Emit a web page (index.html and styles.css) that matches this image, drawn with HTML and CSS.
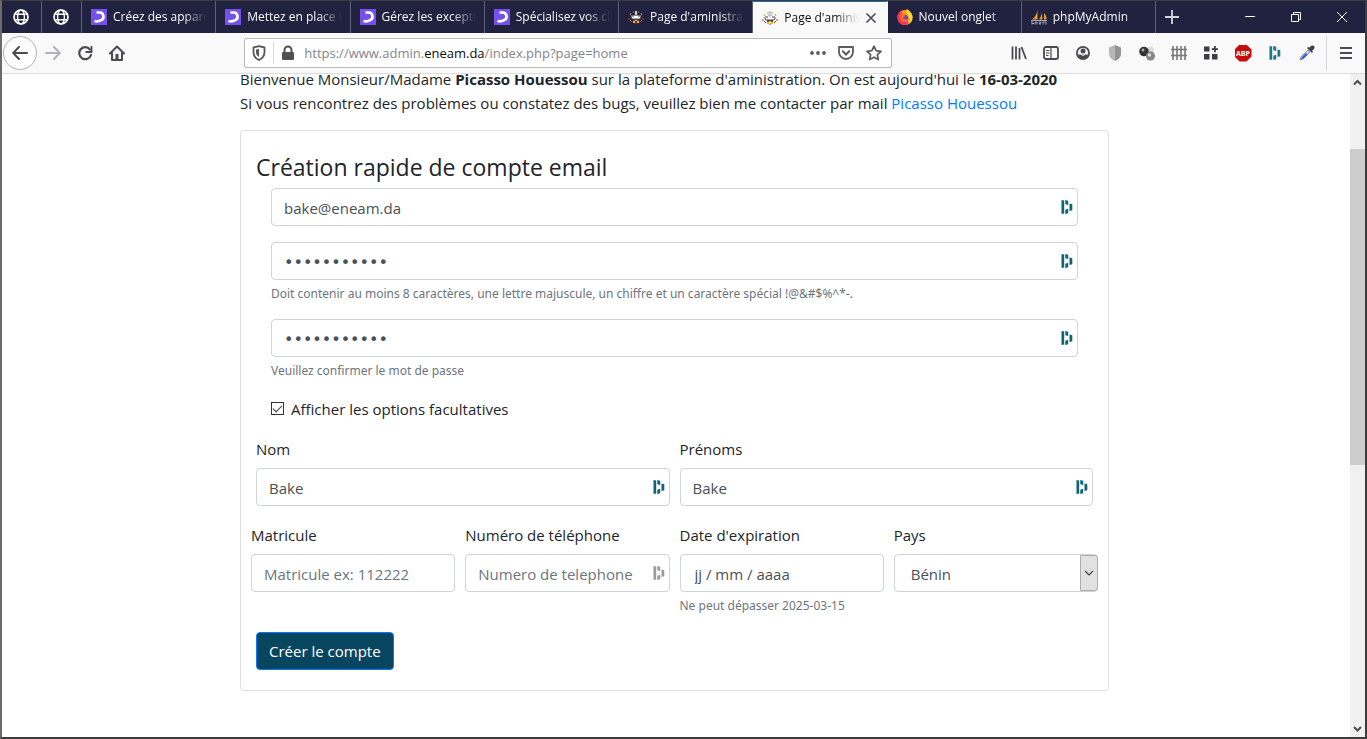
FILE: index.html
```html
<!DOCTYPE html>
<html lang="fr">
<head>
<meta charset="utf-8">
<title>Page d'aministration</title>
<link rel="stylesheet" href="styles.css">
</head>
<body>
<svg class="defs" aria-hidden="true">
  <symbol id="globe" viewBox="0 0 16 16"><circle cx="8" cy="8" r="7" fill="none" stroke="#fff" stroke-width="1.7"/><ellipse cx="8" cy="8" rx="3.4" ry="7" fill="none" stroke="#fff" stroke-width="1.4"/><path d="M1.5 5.3h13M1.5 10.7h13" stroke="#fff" stroke-width="1.4"/></symbol>
  <symbol id="oc" viewBox="0 0 16 16"><path fill="#7451eb" d="M0 0h16v16H0z"/><path d="M5.500 3.500h2.700a4 4 0 0 1 1.500 7.800Q7.500 13 3.500 12" fill="none" stroke="#fff" stroke-width="2.700"/></symbol>
  <symbol id="crest" viewBox="0 0 16 16"><path d="M3 6.500h10L12 10H4z" fill="#fff"/><path d="M7 2h2v4H7z" fill="#fff" stroke="#555" stroke-width=".5"/><path d="M5 10h6v2H5z" fill="#4a4a42"/><path d="M5 12h2v2H5zM9 12h2v2H9zM7 11h2v1H7z" fill="#f5c518"/><path d="M2 11l2 2M14 11l-2 2M7 14h2M1 9v2M15 9v2" stroke="#d8302f"/><path d="M2 6l1-2M14 6l-1-2M5 3h1M10 3h1" stroke="#c8a028"/><path d="M2.500 7.500L4 10h8l1.500-2.500M3 7h3M10 7h3" stroke="#444" fill="none"/></symbol>
  <symbol id="dash" viewBox="0 0 12 16"><path d="M.5 1l2.700.5v13L.5 15zM4.300 1l2.900.7v4.300l-2.900-.8zM4.300 10.800l2.900-1v4.400l-2.900.8zM8.500 4.500l2.800.8v6l-2.800.8z" fill="currentColor"/></symbol>
</svg>
<div class="window">
  <header class="tabstrip">
    <nav class="tabs" aria-label="Onglets">
      <button class="tab pinned" aria-label="Onglet épinglé 1"><svg class="i16"><use href="#globe"/></svg></button>
      <button class="tab pinned" aria-label="Onglet épinglé 2"><svg class="i16"><use href="#globe"/></svg></button>
      <button class="tab"><svg class="i16"><use href="#oc"/></svg><span class="title">Créez des apparences</span></button>
      <button class="tab"><svg class="i16"><use href="#oc"/></svg><span class="title">Mettez en place un</span></button>
      <button class="tab"><svg class="i16"><use href="#oc"/></svg><span class="title">Gérez les exceptions</span></button>
      <button class="tab"><svg class="i16"><use href="#oc"/></svg><span class="title">Spécialisez vos classes</span></button>
      <button class="tab"><svg class="i16"><use href="#crest"/></svg><span class="title">Page d'aministration</span></button>
      <button class="tab active"><svg class="i16"><use href="#crest"/></svg><span class="title">Page d'aministration</span><svg class="close" viewBox="0 0 12 12"><path d="M1.500 1.500l9 9M10.500 1.500l-9 9" stroke="#4a4a4f" stroke-width="1.600"/></svg></button>
      <button class="tab"><svg class="i16" viewBox="0 0 16 16"><circle cx="8" cy="8.500" r="7.500" fill="#ff9a20"/><path d="M.6 6C1.500 4 3 2 3.500 1.500L5 4l-1 8 9 1.500C10 17 5 16.500 2.500 14 .5 12 0 9 .6 6z" fill="#f5315c"/><path d="M9.500 0c3 1.500 6 4 6 8.500s-3 6.500-5.500 7c4-3 2-6 1-8S9 3 9.500 0z" fill="#ffd72b"/><circle cx="8" cy="9" r="3.300" fill="#7541c4"/><path d="M3.500 5.500c2-1 4 0 5 1.500L6 8.500c.5 2 3 2 5 1-1 3-5 4-7 1-1-2-1-4-.5-5z" fill="#ff6a26"/></svg><span class="title">Nouvel onglet</span></button>
      <button class="tab"><svg class="i16" viewBox="0 0 16 16"><path d="M6.500 0c0 4-2 8-5.500 10.500h5.500zM10.500 2c.5 3-.5 6-2.500 8.500h3.500zM13 4c2 2 2.500 4 2.500 6.500H13z" fill="#f39a2d"/><path d="M0 11.500h16M1 12v3.500M4 15.500V13h2v2.500M8 12.500l1 3 1-3M12 15.500V13h3v2.500M1 14.500h2" stroke="#a5a8b8" fill="none"/></svg><span class="title">phpMyAdmin</span></button>
    </nav>
    <div class="controls">
      <button class="newtab" aria-label="Nouvel onglet"><svg class="i16" viewBox="0 0 16 16"><path d="M8 1v14M1 8h14" stroke="#d5d5dc" stroke-width="1.800"/></svg></button>
      <button class="wbtn" aria-label="Réduire"><svg class="i12" viewBox="0 0 12 12"><path d="M1 5.500h10" stroke="#fff"/></svg></button>
      <button class="wbtn" aria-label="Restaurer"><svg class="i12" viewBox="0 0 12 12"><path d="M1.500 3.500h7v7h-7zM3.500 3V1.500h7v7H9" fill="none" stroke="#fff"/></svg></button>
      <button class="wbtn" aria-label="Fermer"><svg class="i12" viewBox="0 0 12 12"><path d="M1 1l10 10M11 1L1 11" stroke="#fff"/></svg></button>
    </div>
  </header>

  <div class="toolbar">
    <button class="back" aria-label="Précédent"><svg class="i16" viewBox="0 0 16 16"><path d="M15 8H1.500M7 2L1.200 8 7 14" fill="none" stroke="#4a4a4f" stroke-width="2" stroke-linecap="round" stroke-linejoin="round"/></svg></button>
    <button class="tool" aria-label="Suivant"><svg class="i16" viewBox="0 0 16 16"><path d="M1 8h13.500M9 2l5.800 6L9 14" fill="none" stroke="#b2b2b4" stroke-width="2" stroke-linecap="round" stroke-linejoin="round"/></svg></button>
    <button class="tool" aria-label="Actualiser"><svg class="i16" viewBox="0 0 16 16"><path d="M13 4.500A6 6 0 1 0 14 10" fill="none" stroke="#4a4a4f" stroke-width="2.200" stroke-linecap="round"/><path d="M14.500 1v6h-6" fill="none" stroke="#4a4a4f" stroke-width="1.800"/></svg></button>
    <button class="tool" aria-label="Accueil"><svg class="i16" viewBox="0 0 16 16"><path d="M1 8.500L8 1.500l7 7M3 8v7h10V8" fill="none" stroke="#4a4a4f" stroke-width="2" stroke-linejoin="round" stroke-linecap="round"/><path d="M6.500 9h3v6h-3z" fill="#4a4a4f"/></svg></button>
    <div class="spacer"></div>
    <div class="urlbar">
      <svg class="i16" viewBox="0 0 16 16"><path d="M8 1.200L2.500 2.500V7c0 4 2 6.500 5.500 8 3.500-1.500 5.500-4 5.500-8V2.500z" fill="none" stroke="#55555a" stroke-width="1.800" stroke-linejoin="round"/><path d="M8 4v8c-2-1-3-3-3-5V4.500z" fill="#55555a"/></svg>
      <span class="urlsep"></span>
      <svg class="i16" viewBox="0 0 16 16"><path d="M4.500 8V5a3.500 3.500 0 0 1 7 0v3" fill="none" stroke="#4f4f54" stroke-width="2"/><rect x="2" y="7" width="12" height="8" rx="1.300" fill="#4f4f54"/></svg>
      <div class="url" role="textbox" contenteditable="true" aria-label="Adresse" spellcheck="false">https://www.admin.<b>eneam.da</b>/index.php?page=home</div>
      <button class="ub" aria-label="Actions"><svg class="i16" viewBox="0 0 16 16"><circle cx="2" cy="8" r="1.900" fill="#5c5c61"/><circle cx="8" cy="8" r="1.900" fill="#5c5c61"/><circle cx="14" cy="8" r="1.900" fill="#5c5c61"/></svg></button>
      <button class="ub" aria-label="Pocket"><svg class="i16" viewBox="0 0 16 16"><path d="M1 2h14v5a7 7 0 0 1-14 0z" fill="none" stroke="#5c5c61" stroke-width="1.800" stroke-linejoin="round"/><path d="M4.800 6.300L8 9.500l3.200-3.200" fill="none" stroke="#5c5c61" stroke-width="2" stroke-linecap="round"/></svg></button>
      <button class="ub" aria-label="Marquer cette page"><svg class="i16" viewBox="0 0 16 16"><path d="M8 1.200l2.100 4.500 4.900.6-3.600 3.400.9 4.900L8 12.200l-4.300 2.400.9-4.900L1 6.300l4.900-.6z" fill="none" stroke="#5c5c61" stroke-width="1.700" stroke-linejoin="round"/></svg></button>
    </div>
    <div class="spacer"></div>
    <button class="tool" aria-label="Bibliothèque"><svg class="i16" viewBox="0 0 16 16"><path d="M1.500 1.500v13M5 1.500v13M8.500 3v11.500M10.500 2l4.500 12" stroke="#4a4a4f" stroke-width="1.800" fill="none"/></svg></button>
    <button class="tool" aria-label="Panneaux latéraux"><svg class="i16" viewBox="0 0 16 16"><rect x="1" y="2" width="14" height="12" rx="2" fill="none" stroke="#4a4a4f" stroke-width="1.800"/><path d="M8 2v12M3 5.500h3.500M3 8h3.500M3 10.500h2.500" stroke="#4a4a4f" stroke-width="1.200"/></svg></button>
    <button class="tool" aria-label="Compte"><svg class="i16" viewBox="0 0 16 16"><circle cx="8" cy="8" r="6.100" fill="none" stroke="#4a4a4f" stroke-width="1.800"/><circle cx="8" cy="6" r="2.500" fill="#4a4a4f"/><path d="M3 9.500h10C12.500 12.500 10 14 8 14s-4.500-1.500-5-4.500z" fill="#4a4a4f"/><path d="M5.500 9q2.500 3 5 0" stroke="#f9f9fa" stroke-width="1" fill="none"/></svg></button>
    <button class="tool" aria-label="Protection"><svg class="i16" viewBox="0 0 16 16"><path d="M8 0L2 2.500V9c0 3 2.500 5.500 6 7z" fill="#b6b6b6"/><path d="M8 0l6 2.500V9c0 3-2.500 5.500-6 7z" fill="#949494"/></svg></button>
    <button class="tool" aria-label="Sphères"><svg class="i16" viewBox="0 0 16 16"><circle cx="11.500" cy="5" r="3.500" fill="#ddd"/><circle cx="5" cy="6.500" r="4.800" fill="#333"/><circle cx="4" cy="5" r="1.500" fill="#aaa"/><circle cx="11.500" cy="11" r="4.500" fill="#858585"/><circle cx="10.500" cy="10" r="1.700" fill="#ddd"/></svg></button>
    <button class="tool" aria-label="Grille"><svg class="i16" viewBox="0 0 16 16"><path d="M2 1v14M6 1v14M10 1v14M14 1v14M0 4.500h16M0 10.500h16" stroke="#777" stroke-width="1.600"/></svg></button>
    <button class="tool" aria-label="Modules"><svg class="i16" viewBox="0 0 16 16"><path d="M1 1.500h5.500v5H1zM1 9h5.500v5.500H1zM9 9h5.500v5.500H9zM11 1h1.800v2.200H15V5h-2.200v2.200H11V5H8.800V3.200H11z" fill="#3d3d42"/></svg></button>
    <button class="tool abp" aria-label="Adblock Plus"><span>ABP</span></button>
    <button class="tool teal" aria-label="Dashlane"><svg class="dashicon"><use href="#dash"/></svg></button>
    <button class="tool" aria-label="Pipette"><svg class="i16" viewBox="0 0 16 16"><path d="M1 15l1-3 7-7 2 2-7 7z" fill="#cfd6e8" stroke="#6b7590" stroke-width=".8"/><path d="M2 14l1-2 4-4 1.500 1.500-4 4z" fill="#2e62d9"/><path d="M8 3l5 5 1-1.300-1-1C16 4 16 2 15 1s-3-1-4.500 1.500L9.500 2z" fill="#3e424c"/></svg></button>
    <span class="toolsep"></span>
    <button class="menu" aria-label="Menu"><svg class="i16" viewBox="0 0 16 16"><path d="M2 3h12M2 8h12M2 13h12" stroke="#4a4a4f" stroke-width="2"/></svg></button>
  </div>

  <div class="view">
    <main class="page">
      <div class="content">
        <p class="intro">Bienvenue Monsieur/Madame <strong>Picasso Houessou</strong> sur la plateforme d'aministration. On est aujourd'hui le <strong>16-03-2020</strong><br>Si vous rencontrez des problèmes ou constatez des bugs, veuillez bien me contacter par mail <a href="#contact">Picasso Houessou</a></p>
        <form class="card">
          <h1>Création rapide de compte email</h1>
          <div class="inset">
            <div class="group"><div class="field"><input class="control" type="email" value="bake@eneam.da" aria-label="Adresse email"><svg class="fill"><use href="#dash"/></svg></div></div>
            <div class="group"><div class="field"><input class="control" type="password" value="motdepasse1" aria-label="Mot de passe" aria-describedby="h1"><svg class="fill"><use href="#dash"/></svg></div><small id="h1">Doit contenir au moins 8 caractères, une lettre majuscule, un chiffre et un caractère spécial !@&amp;#$%^*-.</small></div>
            <div class="group"><div class="field"><input class="control" type="password" value="motdepasse1" aria-label="Confirmation" aria-describedby="h2"><svg class="fill"><use href="#dash"/></svg></div><small id="h2">Veuillez confirmer le mot de passe</small></div>
            <div class="group check"><input type="checkbox" id="opt" checked><label for="opt">Afficher les options facultatives</label></div>
          </div>
          <div class="row two">
            <div class="group"><label for="nom">Nom</label><div class="field"><input class="control" type="text" id="nom" value="Bake"><svg class="fill"><use href="#dash"/></svg></div></div>
            <div class="group"><label for="prenoms">Prénoms</label><div class="field"><input class="control" type="text" id="prenoms" value="Bake"><svg class="fill"><use href="#dash"/></svg></div></div>
          </div>
          <div class="row four">
            <div class="group"><label for="mat">Matricule</label><input class="control" type="text" id="mat" placeholder="Matricule ex: 112222"></div>
            <div class="group"><label for="tel">Numéro de téléphone</label><div class="field"><input class="control" type="tel" id="tel" placeholder="Numero de telephone"><svg class="fill grey"><use href="#dash"/></svg></div></div>
            <div class="group"><label for="exp">Date d'expiration</label><input class="control date" type="text" id="exp" value="jj / mm / aaaa" aria-describedby="h3"><small id="h3">Ne peut dépasser 2025-03-15</small></div>
            <div class="group"><label for="pays">Pays</label><div class="field"><select class="control" id="pays"><option>Bénin</option></select><span class="arrow"><svg viewBox="0 0 10 6"><path d="M1 1l4 4 4-4" fill="none" stroke="#444" stroke-width="1.200"/></svg></span></div></div>
          </div>
          <button class="submit" type="submit">Créer le compte</button>
        </form>
      </div>
    </main>
    <div class="scrollbar" aria-hidden="true">
      <svg class="sbtn" viewBox="0 0 15 17"><path d="M4 10.500L7.500 7l3.500 3.500" fill="none" stroke="#505050" stroke-width="2"/></svg>
      <span class="before"></span><span class="thumb"></span><span class="after"></span>
      <svg class="sbtn" viewBox="0 0 15 17"><path d="M4 7l3.500 3.500L11 7" fill="none" stroke="#505050" stroke-width="2"/></svg>
    </div>
  </div>
</div>
</body>
</html>
```

FILE: styles.css
```css
* { box-sizing: border-box; }
body { margin: 0; font-family: "Open Sans", "Noto Sans", sans-serif; font-size: 15px; line-height: 24px; color: #212529; background: #fff; }
button { font: inherit; border: 0; padding: 0; margin: 0; background: none; color: inherit; display: flex; align-items: center; justify-content: center; }
svg { display: block; flex: none; }
.defs { position: absolute; width: 0; height: 0; }
.i16 { width: 16px; height: 16px; }
.i12 { width: 12px; height: 12px; }
.window { height: 100vh; display: flex; flex-direction: column; border: 2px solid #3c3c3c; border-top-width: 1px; border-left-color: #6a6a6a; overflow: hidden; }

.tabstrip { flex: none; display: flex; height: 32px; background: #20223f; color: #f9f9fa; font-size: 12px; line-height: 16px; }
.tabs { flex: 1; display: flex; min-width: 0; }
.tab { flex: 1; min-width: 0; justify-content: flex-start; gap: 6px; padding: 0 8px 0 9px; border-right: 1px solid #5e5f76; }
.tab.pinned { flex: 0 0 40px; justify-content: center; padding: 0 2px 0 0; }
.tab.active { background: #f9f9fa; color: #0c0c0d; border-right-color: #f9f9fa; border-top: 1px solid #2b6ca8; }
.title { flex: 1; min-width: 0; overflow: hidden; white-space: nowrap; text-align: left; -webkit-mask-image: linear-gradient(to left, transparent, #000 24px); mask-image: linear-gradient(to left, transparent, #000 24px); }
.close { width: 12px; height: 12px; margin-right: 2px; }
.controls { flex: none; display: flex; width: 209px; }
.newtab { width: 32px; margin-right: auto; }
.wbtn { width: 46px; }

.toolbar { flex: none; display: flex; align-items: center; height: 41px; padding-left: 1px; background: #f9f9fa; border-bottom: 1px solid #dcdcdd; }
.back { flex: none; width: 34px; height: 34px; border: 1px solid #b2b2b4; border-radius: 50%; background: #fff; }
.tool { flex: none; width: 32px; height: 32px; }
.spacer { flex: 113; }
.urlbar { flex: 643; min-width: 0; height: 30px; display: flex; align-items: center; gap: 6px; padding: 0 6px; background: #fff; border: 1px solid #bababb; border-radius: 2px; }
.urlsep { width: 1px; height: 22px; background: #dcdcdd; }
.url { flex: 1; min-width: 0; margin-left: 2px; white-space: nowrap; overflow: hidden; font-size: 13px; line-height: 20px; color: #848488; }
.url b { font-weight: 400; color: #0c0c0d; }
.ub { flex: none; width: 22px; height: 22px; }
.abp span { width: 17px; height: 17px; background: #c70d0d; color: #fff; font-size: 7px; font-weight: 700; line-height: 17px; text-align: center; clip-path: polygon(30% 0, 70% 0, 100% 30%, 100% 70%, 70% 100%, 30% 100%, 0 70%, 0 30%); }
.teal { color: #1f7687; }
.dashicon { width: 12px; height: 16px; }
.toolsep { flex: none; width: 1px; height: 34px; margin-left: 3px; background: #d7d7db; }
.menu { flex: none; width: 38px; height: 32px; }

.view { flex: 1; min-height: 0; display: flex; }
.page { flex: 1; min-width: 0; padding-right: 3px; overflow: hidden; }
.content { max-width: 869px; margin: -7px auto 0; }
.intro { margin: 0 0 15px; }
a { color: #007bff; text-decoration: none; }
.card { border: 1px solid #dfdfdf; border-radius: 4px; padding: 22px 15px 20px; }
h1 { margin: 0 0 6px; font-size: 23px; line-height: 29px; font-weight: 400; }
.inset { padding: 0 15px; }
.group { margin-bottom: 16px; min-width: 0; }
.group > label { display: block; margin-bottom: 8px; padding-top: 2px; line-height: 22px; }
.field { position: relative; }
.control { display: block; width: 100%; height: 38px; padding: 2px 12px 0; border: 1px solid #ced4da; border-radius: 4px; background: #fff; color: #495057; font: inherit; }
.control::placeholder { color: #6c757d; opacity: 1; }
.control[type="password"] { font-family: "DejaVu Sans", sans-serif; font-size: 16px; }
.control.date { padding-left: 14px; }
select.control { appearance: none; padding-left: 16px; }
.fill { position: absolute; right: 5px; top: 11px; width: 12px; height: 16px; color: #0e6475; }
.fill.grey { color: #9a9a9a; }
.arrow { position: absolute; right: 0; top: 1px; bottom: 1px; width: 18px; display: flex; align-items: center; justify-content: center; background: #e1e1e1; border: 1px solid #adadad; border-radius: 0 3px 3px 0; pointer-events: none; }
.arrow svg { width: 10px; height: 6px; }
small { display: block; margin-top: 5px; font-family: "Noto Sans", sans-serif; font-size: 12px; line-height: 18px; color: #6c757d; }
.check { display: flex; align-items: center; gap: 7px; }
.check > label { margin: 0; }
.check input { appearance: none; width: 13px; height: 13px; margin: 0; border: 1px solid #333; background: #fff; display: grid; place-items: center; }
.check input:checked::before { content: ""; width: 8px; height: 4px; border: solid #333; border-width: 0 0 1px 1px; transform: translateY(-1px) rotate(-45deg); }
.row { display: grid; column-gap: 10px; }
.two { grid-template-columns: 1fr 1fr; }
.four { grid-template-columns: repeat(4, 1fr); margin: 0 -5px 1px; }
.submit { height: 38px; padding: 0 12px; border: 1px solid #007bff; border-radius: 4px; background: #08455f; color: #fff; }

.scrollbar { flex: none; width: 15px; display: flex; flex-direction: column; background: #f0f0f0; }
.sbtn { width: 15px; height: 17px; }
.before { flex: 58; }
.thumb { flex: 317; background: #cdcdcd; }
.after { flex: 255; }
```
